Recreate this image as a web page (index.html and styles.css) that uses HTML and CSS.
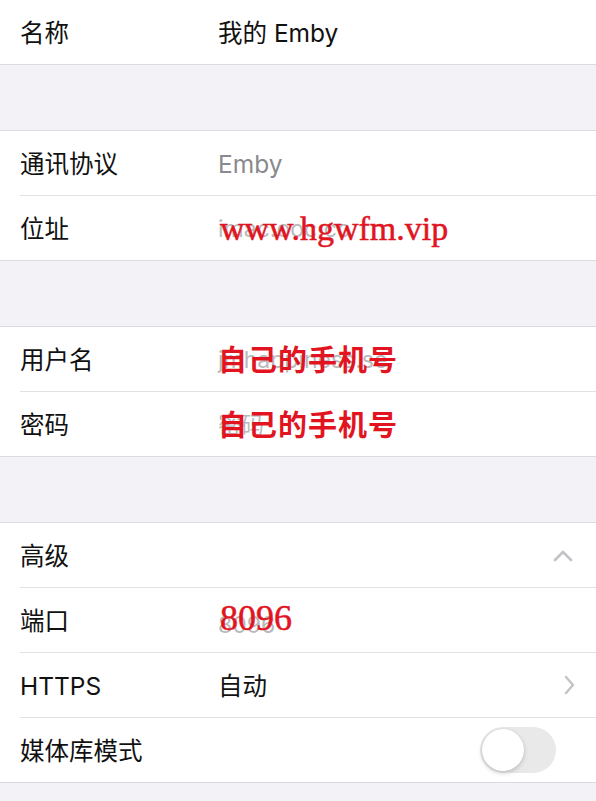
FILE: index.html
```html
<!DOCTYPE html>
<html lang="zh">
<head>
<meta charset="utf-8">
<title>Emby 服务器</title>
<link rel="stylesheet" href="styles.css">
</head>
<body>
<div class="page">
  <section class="group first">
    <div class="row"><span class="label">名称</span><span class="value">我的 Emby</span></div>
  </section>

  <section class="group">
    <div class="row"><span class="label">通讯协议</span><span class="value muted">Emby</span></div>
    <div class="row"><span class="label">位址</span>
      <span class="value stack"><span class="under">imac.ooc.cc</span><span class="mark serif">www.hgwfm.vip</span></span>
    </div>
  </section>

  <section class="group">
    <div class="row"><span class="label">用户名</span>
      <span class="value stack"><span class="under">jmhappiness.se</span><span class="mark cjk">自己的手机号</span></span>
    </div>
    <div class="row"><span class="label">密码</span>
      <span class="value stack"><span class="under">密码</span><span class="mark cjk">自己的手机号</span></span>
    </div>
  </section>

  <section class="group">
    <div class="row"><span class="label">高级</span><span class="value"></span>
      <svg class="chev-up" width="22" height="14" viewBox="0 0 22 14"><path d="M3 12 L11 4 L19 12" fill="none" stroke="#c3c3c7" stroke-width="2.6" stroke-linecap="round" stroke-linejoin="round"/></svg>
    </div>
    <div class="row"><span class="label">端口</span>
      <span class="value stack"><span class="under low">8096</span><span class="mark serif big">8096</span></span>
    </div>
    <div class="row"><span class="label">HTTPS</span><span class="value">自动</span>
      <svg class="chev-right" width="14" height="22" viewBox="0 0 14 22"><path d="M4 3 L11 11 L4 19" fill="none" stroke="#c3c3c7" stroke-width="2.4" stroke-linecap="round" stroke-linejoin="round"/></svg>
    </div>
    <div class="row"><span class="label">媒体库模式</span><span class="value"></span>
      <span class="switch"><span class="knob"></span></span>
    </div>
  </section>
</div>
</body>
</html>
```

FILE: styles.css
```css
* { box-sizing: border-box; }
html, body {
  margin: 0;
  padding: 0;
  background: #f2f2f7;
}
body {
  font-family: Inter, "Noto Sans CJK SC", "Noto Sans", sans-serif;
  font-size: 24.5px;
  color: #111;
  width: 596px;
  height: 801px;
  overflow: hidden;
}
.page {
  display: flex;
  flex-direction: column;
  gap: 65px;
}
.group {
  background: #fff;
  border-top: 1px solid #dcdce0;
  border-bottom: 1px solid #dcdce0;
}
.group.first { border-top: none; }
.row {
  box-sizing: content-box;
  height: 64px;
  margin-left: 20px;
  padding-right: 20px;
  display: flex;
  align-items: center;
}
.row + .row { border-top: 1px solid #e2e2e5; }
.label {
  width: 198px;
  flex: none;
  line-height: 1;
  padding-top: 2px;
}
.value {
  flex: 1;
  line-height: 1;
  padding-top: 2px;
}
.muted { color: #8a8a8e; }
.stack {
  display: grid;
  align-items: center;
}
.stack > span { grid-area: 1 / 1; }
.under {
  color: #b9b9bd;
  font-size: 23px;
}
.under.low { padding-top: 8px; }
.mark {
  color: #e1141f;
}
.mark.serif {
  font-family: "Liberation Serif", "DejaVu Serif", serif;
  font-size: 34px;
  padding-left: 2px;
  -webkit-text-stroke: 0.5px #e1141f;
}
.mark.serif.big {
  font-size: 36px;
  padding-bottom: 6px;
  padding-top: 0;
}
.mark.cjk {
  font-family: "Noto Sans CJK SC", sans-serif;
  font-size: 29px;
  font-weight: 700;
  letter-spacing: 1px;
  padding-bottom: 3px;
}
.chev-up { flex: none; margin-right: 2px; }
.chev-right { flex: none; margin-right: 0; }
.switch {
  flex: none;
  width: 76px;
  height: 46px;
  border-radius: 23px;
  background: #e9e9ea;
  padding: 2px;
  margin-right: 20px;
  display: flex;
}
.knob {
  width: 42px;
  height: 42px;
  border-radius: 50%;
  background: #fff;
  box-shadow: 0 2px 5px rgba(0,0,0,0.18), 0 0 1px rgba(0,0,0,0.12);
}
```
